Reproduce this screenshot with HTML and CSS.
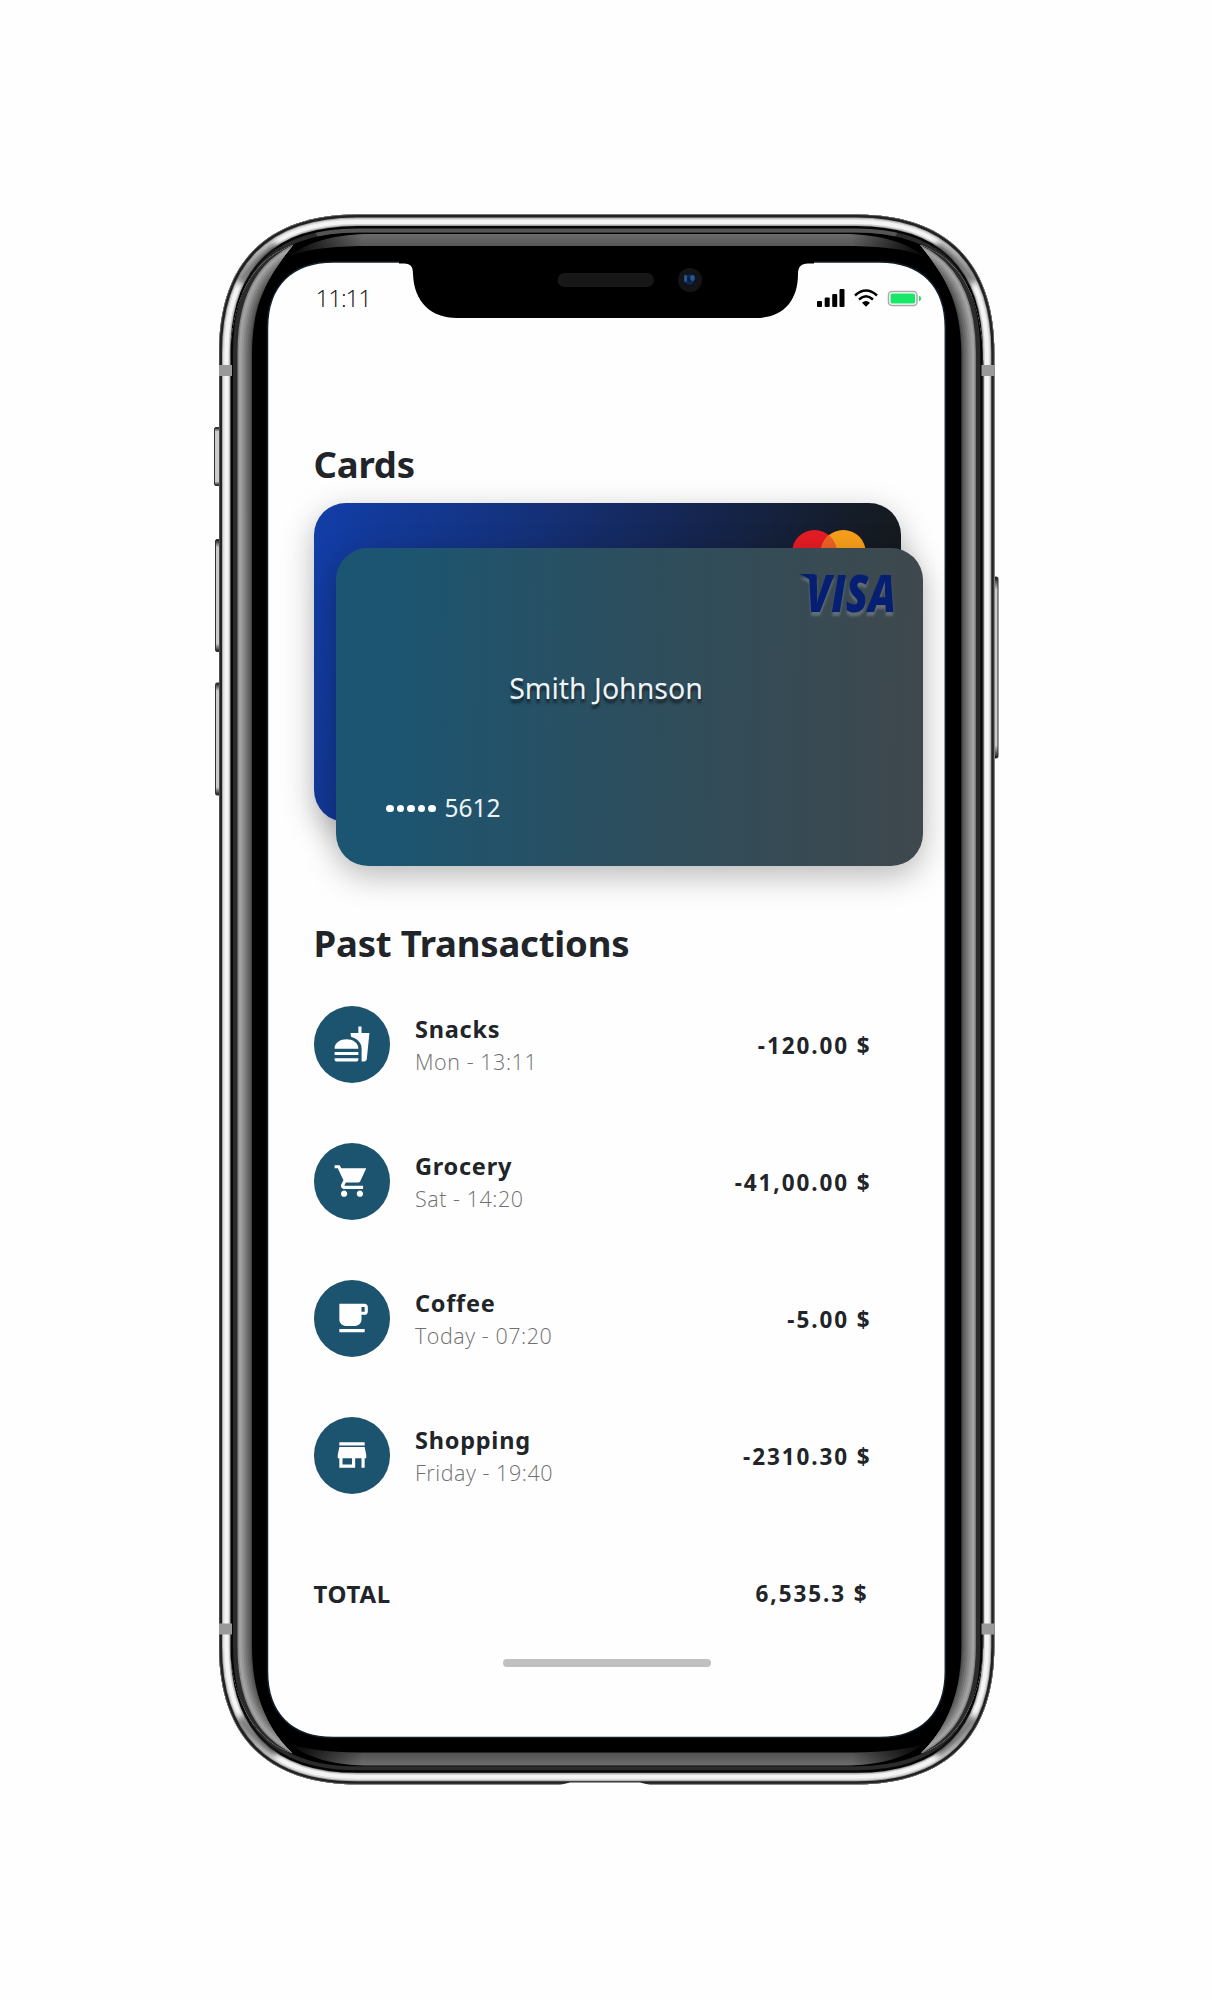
FILE: index.html
```html
<!DOCTYPE html>
<html lang="en">
<head>
<meta charset="utf-8">
<title>Cards</title>
<link rel="stylesheet" href="styles.css">
</head>
<body>
<div class="phone">
  <svg class="frame" viewBox="0 0 1212 2000" aria-hidden="true">
    <defs>
      <path id="body" d="M219 352.500C219 262.500 267 214.500 357 214.500H856.300C946.300 214.500 994.300 262.500 994.300 352.500V1646.300C994.300 1736.300 946.300 1784.300 856.300 1784.300H357C267 1784.300 219 1736.300 219 1646.300Z"/>
      <clipPath id="inside"><use href="#body"/></clipPath>
      <clipPath id="topBand"><path d="M292 200H921L850 300H363Z"/></clipPath>
      <clipPath id="sides">
        <path d="M230 370C230 310 245 262 293 245C270 274 253 300 252 350V1650C253 1700 270 1732 292 1753C250 1740 230 1690 230 1640Z"/>
        <path d="M983.300 370C983.300 310 968.300 262 920.300 245C943.300 274 960.300 300 961.300 350V1650C960.300 1700 943.300 1732 921.300 1753C963.300 1740 983.300 1690 983.300 1640Z"/>
      </clipPath>
      <linearGradient id="gTop" x2="0" y2="1"><stop stop-color="#6a6a6a"/><stop offset="1" stop-color="#474747"/></linearGradient>
      <linearGradient id="gBottom" x2="0" y2="1"><stop stop-color="#3c3c3c"/><stop offset="1" stop-color="#6e6e6e"/></linearGradient>
      <linearGradient id="gFade"><stop stop-color="#000"/><stop offset=".12" stop-color="#fff"/><stop offset=".88" stop-color="#fff"/><stop offset="1" stop-color="#000"/></linearGradient>
      <mask id="fade" maskUnits="userSpaceOnUse" x="280" y="200" width="654" height="1600"><rect x="285" y="200" width="644" height="1600" fill="url(#gFade)"/></mask>
      <filter id="soft"><feGaussianBlur stdDeviation="3"/></filter>
      <linearGradient id="gKey" x2="0" y2="1"><stop stop-color="#111"/><stop offset=".07" stop-color="#ccc"/><stop offset=".93" stop-color="#ccc"/><stop offset="1" stop-color="#111"/></linearGradient>
      <radialGradient id="gLens"><stop stop-color="#0a1330"/><stop offset=".6" stop-color="#102a58"/><stop offset="1" stop-color="#080d18"/></radialGradient>
    </defs>

    <g fill="url(#gKey)" stroke="#333" stroke-width="1">
      <rect x="214.500" y="427.500" width="7" height="58" rx="1.500"/>
      <rect x="215.500" y="539.500" width="6" height="112" rx="1.500"/>
      <rect x="215.500" y="683" width="6" height="112" rx="1.500"/>
      <rect x="992" y="577" width="6" height="181" rx="1.500"/>
    </g>

    <use href="#body" fill="#000"/>
    <g clip-path="url(#inside)" fill="none">
      <use href="#body" stroke="#2b2b2b" stroke-width="36"/>
      <g clip-path="url(#topBand)"><use href="#body" stroke="#555" stroke-width="36"/></g>
      <use href="#body" stroke="#050505" stroke-width="28"/>
      <use href="#body" stroke="#999" stroke-width="23"/>
      <use href="#body" stroke="#ccc" stroke-width="21.500"/>
      <use href="#body" stroke="#f4f4f4" stroke-width="19"/>
      <use href="#body" stroke="#dcdcdc" stroke-width="11"/>
      <use href="#body" stroke="#aaa" stroke-width="8"/>
      <use href="#body" stroke="#222" stroke-width="6"/>
      <use href="#body" stroke="#777" stroke-width="1"/>
    </g>
    <g fill="none" stroke="#222" stroke-width="7" stroke-opacity=".75" filter="url(#soft)">
      <path d="M240 283Q253 259 277 245"/>
      <path d="M973.300 283Q960.300 259 936.300 245"/>
      <path d="M240 1717Q253 1740 277 1754"/>
      <path d="M973.300 1717Q960.300 1740 936.300 1754"/>
    </g>

    <g clip-path="url(#sides)"><g clip-path="url(#inside)" fill="none">
      <use href="#body" stroke="#444" stroke-width="100"/>
      <use href="#body" stroke="#565656" stroke-width="64"/>
      <use href="#body" stroke="#656565" stroke-width="61"/>
      <use href="#body" stroke="#747474" stroke-width="57"/>
      <use href="#body" stroke="#858585" stroke-width="53"/>
      <use href="#body" stroke="#959595" stroke-width="49"/>
      <use href="#body" stroke="#a2a2a2" stroke-width="45"/>
      <use href="#body" stroke="#8a8a8a" stroke-width="40"/>
      <use href="#body" stroke="#2b2b2b" stroke-width="37"/>
      <use href="#body" stroke="#050505" stroke-width="28"/>
      <use href="#body" stroke="#999" stroke-width="23"/>
    </g></g>

    <g mask="url(#fade)">
      <path d="M290 256C310 240 340 234 370 234H843.300C873.300 234 903.300 240 923.300 256C903.300 248 873.300 246 843.300 246H370C340 246 310 248 290 256Z" fill="url(#gTop)"/>
      <path d="M290 1744C310 1760 340 1765.500 370 1765.500H843.300C873.300 1765.500 903.300 1760 923.300 1744C903.300 1751 873.300 1752.500 843.300 1752.500H370C340 1752.500 310 1751 290 1744Z" fill="url(#gBottom)"/>
    </g>

    <g fill="#999">
      <rect x="219" y="365" width="13" height="11"/>
      <rect x="981.500" y="365" width="13" height="11"/>
      <rect x="219" y="1623.500" width="13" height="11"/>
      <rect x="981.500" y="1623.500" width="13" height="11"/>
    </g>
    <path d="M560 1785L570 1782.500H640L650 1785Z" fill="#fff"/>

    <path d="M267.500 328C267.500 286 291.500 262 333.500 262H879.300C921.300 262 945.300 286 945.300 328V1671.500C945.300 1713.500 921.300 1737.500 879.300 1737.500H333.500C291.500 1737.500 267.500 1713.500 267.500 1671.500Z" fill="#fefefe" stroke="#14212a" stroke-width="1.500"/>
    <path d="M399 260V263.500H404C411 263.500 413 267 413 274C414 302 431 318 457 318H756C782 318 798 302 798 274C798 267 801 263.500 808 263.500H814V260Z"/>
    <rect x="557.500" y="273" width="96.500" height="14" rx="7" fill="#171717"/>
    <circle cx="690" cy="280" r="12" fill="#131416"/>
    <circle cx="689.500" cy="279.500" r="6.500" fill="url(#gLens)"/>
    <ellipse cx="685.500" cy="278.500" rx="1.500" ry="3.800" fill="#28588c"/>
    <ellipse cx="692.500" cy="278" rx="2.300" ry="3" fill="#235a94"/>
  </svg>

  <main class="screen">
    <header class="status">
      <span class="clock">11:11</span>
      <svg class="status-icons" viewBox="0 0 106 20" aria-hidden="true">
        <g><rect x="0" y="13" width="5" height="6" rx="1"/><rect x="7.700" y="9.500" width="5" height="9.500" rx="1"/><rect x="15.200" y="6" width="5" height="13" rx="1"/><rect x="22.500" y="1" width="5" height="18" rx="1"/></g>
        <g fill="none" stroke="#000" stroke-width="2.400"><path d="M38 7.500Q49 -2.500 60 7.500"/><path d="M42 11.500Q49 5 56 11.500"/></g>
        <path d="M45 14.800Q49 11.300 53 14.800L49 18.800Z"/>
        <rect x="71.500" y="3.500" width="28.500" height="14" rx="3.500" fill="#fff" stroke="#aaa" stroke-width="1.500"/>
        <rect x="73.500" y="5.500" width="24.500" height="10" rx="1.500" fill="#18e868"/>
        <path d="M102.500 8Q105 10.500 102.500 13Z" fill="#18e868" stroke="#18e868"/>
      </svg>
    </header>

    <h1 class="title">Cards</h1>
    <section class="cards">
      <div class="card card-back">
        <svg class="mastercard" viewBox="0 0 74 46"><circle cx="22.500" cy="22.500" r="22.500" fill="#e61c24"/><circle cx="51.300" cy="22.500" r="22.500" fill="#f99f1b"/><path d="M36.900 5.200A22.500 22.500 0 0 1 36.900 39.800A22.500 22.500 0 0 1 36.900 5.200Z" fill="#f26122"/></svg>
      </div>
      <div class="card card-front">
        <svg class="visa" viewBox="0 0 100 50" role="img">
          <text x="7" y="37.500" textLength="90" lengthAdjust="spacingAndGlyphs">VISA</text>
          <path d="M0 0H16L15 10Q9 3 0 0Z"/>
        </svg>
        <p class="holder">Smith Johnson</p>
        <p class="number"><i></i><i></i><i></i><i></i><i></i><span>5612</span></p>
      </div>
    </section>

    <h2 class="title title-past">Past Transactions</h2>
    <ul class="list">
      <li class="row">
        <div class="icon"><svg viewBox="0 0 24 24"><path d="M18.060 22.990h1.660c.84 0 1.530-.64 1.630-1.460L23 5.050h-5V1h-1.970v4.050h-4.970l.3 2.340c1.710.47 3.310 1.320 4.270 2.260 1.440 1.420 2.430 2.890 2.430 5.290v8.050zM1 21.990V21h15.030v.99c0 .55-.45 1-1.010 1H2.010c-.56 0-1.010-.45-1.010-1zm15.030-7c0-8-15.030-8-15.030 0h15.030zM1.020 17h15v2h-15z"/></svg></div>
        <div class="info"><b>Snacks</b><small>Mon - 13:11</small></div>
        <strong>-120.00 $</strong>
      </li>
      <li class="row">
        <div class="icon"><svg viewBox="0 0 24 24"><path d="M7 18c-1.100 0-1.990.9-1.990 2S5.900 22 7 22s2-.9 2-2-.9-2-2-2zM1 2v2h2l3.600 7.590-1.350 2.450c-.16.28-.25.61-.25.960 0 1.100.9 2 2 2h12v-2H7.420c-.14 0-.25-.11-.25-.25l.03-.12.9-1.630h7.450c.75 0 1.410-.41 1.750-1.030L21 4H5.210l-.94-2H1zm16 16c-1.100 0-1.990.9-1.990 2s.89 2 1.990 2 2-.9 2-2-.9-2-2-2z"/></svg></div>
        <div class="info"><b>Grocery</b><small>Sat - 14:20</small></div>
        <strong>-41,00.00 $</strong>
      </li>
      <li class="row">
        <div class="icon"><svg viewBox="0 0 24 24"><path d="M20 3H4v10c0 2.210 1.790 4 4 4h6c2.210 0 4-1.790 4-4v-3h2c1.110 0 2-.9 2-2V5c0-1.110-.89-2-2-2zm0 5h-2V5h2v3zM4 19h16v2H4z"/></svg></div>
        <div class="info"><b>Coffee</b><small>Today - 07:20</small></div>
        <strong>-5.00 $</strong>
      </li>
      <li class="row">
        <div class="icon"><svg viewBox="0 0 24 24"><path d="M20 4H4v2h16V4zm1 10v-2l-1-5H4l-1 5v2h1v6h10v-6h4v6h2v-6h1zm-9 4H6v-4h6v4z"/></svg></div>
        <div class="info"><b>Shopping</b><small>Friday - 19:40</small></div>
        <strong>-2310.30 $</strong>
      </li>
    </ul>
    <footer class="total"><b>TOTAL</b><strong>6,535.3 $</strong></footer>
    <div class="home"></div>
  </main>
</div>
</body>
</html>
```
FILE: styles.css
```css
* { box-sizing: border-box; margin: 0; padding: 0; }
body { background: #fefefe; color: #212529; font-family: "Noto Sans", "Open Sans", sans-serif; }
.phone { position: relative; width: 1212px; height: 2000px; padding: 262px 267px 263px 268px; overflow: hidden; }
.frame { position: absolute; inset: 0; width: 1212px; height: 2000px; }
.screen { position: relative; height: 1475px; padding: 0 22px 0 45.500px; display: flex; flex-direction: column; }

.status { display: flex; justify-content: space-between; align-items: flex-start; height: 166px; padding-top: 26px; }
.clock { font: 300 24px/20px "Open Sans", sans-serif; letter-spacing: -1px; margin-left: 2px; color: #111; }
.status-icons { width: 106px; height: 20px; }

.title { height: 75px; font-size: 36.500px; font-weight: 700; line-height: 72px; letter-spacing: -.2px; }

.cards { display: grid; height: 363px; width: 610px; }
.card { grid-area: 1 / 1; width: 587px; height: 318.500px; border-radius: 32px; box-shadow: 0 10px 32px rgba(0, 0, 0, .28); display: flex; flex-direction: column; }
.card-back { background: linear-gradient(105deg, #123ea9, #14327e 30%, #15254f 58%, #151b22 85%, #141718); padding: 27px 35px 0 0; align-items: flex-end; }
.mastercard { width: 74px; height: 46px; }
.card-front { position: relative; margin: 44.500px 0 0 22.500px; background: linear-gradient(91deg, #1c5571 10%, #2e4e5d 53%, #3f484d); color: #eef3f5; padding: 26px 24px 0 50px; }
.visa { width: 100px; height: 50px; align-self: flex-end; overflow: visible; fill: #061f72; filter: drop-shadow(0 4px 1px rgba(255, 255, 255, .2)); }
.visa text { font: italic 800 52px "Open Sans", sans-serif; }
.holder { height: 40px; margin-top: 44px; text-align: center; font-size: 28.500px; line-height: 40px; text-shadow: 0 4px 3px rgba(0, 0, 0, .6); padding-right: 73px; }
.number { display: flex; align-items: center; gap: 3px; height: 34px; margin-top: 83px; font-size: 24.500px; }
.number i { width: 7.500px; height: 7.500px; margin-top: 2px; border-radius: 50%; background: #fff; }
.number span { margin-left: 6px; }

.title-past { height: 140px; line-height: 155px; }
.list { list-style: none; }
.row { display: flex; align-items: center; height: 137px; padding: 0 6px 60.500px 0; }
.row, .total { width: 564px; }
.icon { width: 76.500px; height: 76.500px; border-radius: 50%; background: #1c5470; display: flex; align-items: center; justify-content: center; }
.icon svg { width: 38px; height: 38px; fill: #fff; }
.info { margin: 2px 0 0 25px; flex: 1; display: flex; flex-direction: column; }
.info b { font-size: 23.500px; line-height: 33px; letter-spacing: .75px; }
.info small { font: 300 21.500px/32px "Open Sans", sans-serif; letter-spacing: .55px; color: #707070; }
strong { font-size: 22.500px; font-weight: 700; letter-spacing: 1.900px; padding-top: 2px; }
.total { display: flex; justify-content: space-between; align-items: center; height: 60px; margin-top: 8px; padding-right: 9px; }
.total b { font-size: 24px; letter-spacing: .7px; padding-top: 3px; }
.home { width: 208px; height: 8px; border-radius: 4px; background: #c0c0c0; align-self: center; margin: 37px 22px 0 0; }
```
